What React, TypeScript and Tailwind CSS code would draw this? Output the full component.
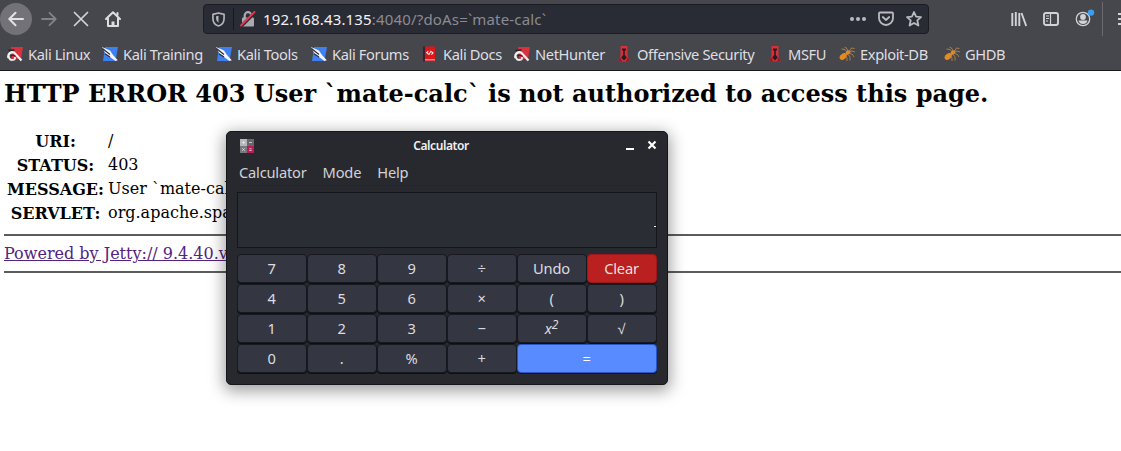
import React from "react";

type IconProps = { className?: string };

const Dragon = ({ className = "" }: IconProps) => (
  <svg viewBox="0 0 16 16" className={`h-4 w-4 shrink-0 ${className}`}>
    <path d="M4 1H16L14 13H5Z" fill="#d9323f" />
    <path d="M1.5 12C0.5 8 3.5 5.5 7 6.5L14.5 14.5" fill="none" stroke="#f4eeee" strokeWidth="2.3" />
    <path d="M1.5 10C1.5 13 4 14.8 7 13.6C8.2 13 8.2 11.8 7.6 11" fill="none" stroke="#f4eeee" strokeWidth="2" />
    <path d="M1.5 4.5L7.5 4" stroke="#25252c" strokeWidth="1.4" />
    <path d="M4 10Q6 8 8.6 10.5" fill="none" stroke="#25252c" strokeWidth="1.2" />
  </svg>
);

const Knife = () => (
  <svg viewBox="0 0 16 16" className="h-4 w-4 shrink-0">
    <path d="M3 1H16L13.5 15H1Z" fill="#3f7ff0" />
    <path d="M0 1L8 4.5L11 9L15.8 14.2L13.5 15L8 11L3.5 7.5Z" fill="#f3f6fb" />
    <path d="M0.5 2.5L8 8.5M3 7.8L8 11" stroke="#272b38" strokeWidth="1.1" />
  </svg>
);

const Docs = () => (
  <svg viewBox="0 0 16 16" className="h-4 w-4 shrink-0">
    <path d="M1 .5H4V15.5H1Z" fill="#3d2030" />
    <path d="M3 .5H13V15.5H3Z" fill="#d9181b" />
    <path d="M3 13.8H13" stroke="#f0dddd" strokeWidth=".9" />
    <path d="M6.3 5.2L4.7 6.7L7 8.4L8.8 5.2L11 6.9L9.4 8.6" fill="none" stroke="#f8e8e8" strokeWidth="1.1" />
  </svg>
);

const Tower = () => (
  <svg viewBox="0 0 16 16" className="h-4 w-4 shrink-0">
    <path d="M4.5 0H11.5V10L14 15.5H2L4.5 10Z" fill="#d82f38" />
    <path d="M6 2.5H10V4.5H8.8V9L10.8 11.5L8 14.5L5.2 11.5L7.2 9V4.5H6Z" fill="#291b20" />
    <path d="M2 15.5L4.5 11L6 15.5M14 15.5L11.5 11L10 15.5" fill="#8f1d24" />
  </svg>
);

const Bug = () => (
  <svg viewBox="0 0 16 16" className="h-4 w-4 shrink-0">
    <g fill="#e38a20">
      <ellipse cx="4.2" cy="10.5" rx="4" ry="2.7" transform="rotate(-38 4.2 10.5)" />
      <ellipse cx="9" cy="6.5" rx="2.7" ry="1.8" transform="rotate(-38 9 6.5)" />
    </g>
    <path d="M8 6L6 3.5L2.5 3M9 6L8 2.5L5.5 1M10 6L12.5 2L15.5 2.5M10 6.5L13 5L16 6M9.5 7L13.5 8.5L15 11M8 8L11 10.5V14.5M6 9L8 12V15" fill="none" stroke="#c28b4a" strokeWidth=".8" />
  </svg>
);

const bookmarks = [
  { text: "Kali Linux", width: "w-[95px]", Icon: Dragon },
  { text: "Kali Training", width: "w-[114px]", Icon: Knife },
  { text: "Kali Tools", width: "w-[95px]", Icon: Knife },
  { text: "Kali Forums", width: "w-[111px]", Icon: Knife },
  { text: "Kali Docs", width: "w-[92px]", Icon: Docs },
  { text: "NetHunter", width: "w-[102px]", Icon: Dragon },
  { text: "Offensive Security", width: "w-[151px]", Icon: Tower },
  { text: "MSFU", width: "w-[72px]", Icon: Tower },
  { text: "Exploit-DB", width: "w-[105px]", Icon: Bug },
  { text: "GHDB", width: "w-[80px]", Icon: Bug },
];

const Toolbar = () => (
  <div className="flex h-[38px] items-center overflow-hidden">
    <div className="flex h-8 w-8 shrink-0 items-center justify-center rounded-full bg-[#727278]">
      <svg viewBox="0 0 16 16" className="h-4 w-4" fill="none" stroke="#e2e2e4" strokeWidth="2" strokeLinecap="round" strokeLinejoin="round">
        <path d="M15 8H1.5M7.5 1.8L1.3 8L7.5 14.2" />
      </svg>
    </div>
    <svg viewBox="0 0 16 16" className="ml-[9px] h-4 w-4 shrink-0" fill="none" stroke="#828287" strokeWidth="1.8" strokeLinecap="round" strokeLinejoin="round">
      <path d="M1 8H14.5M8.5 1.8L14.7 8L8.5 14.2" />
    </svg>
    <svg viewBox="0 0 16 16" className="ml-4 h-4 w-4 shrink-0" fill="none" stroke="#d4d4d7" strokeWidth="1.7" strokeLinecap="round">
      <path d="M1.5 1.5L14.5 14.5M14.5 1.5L1.5 14.5" />
    </svg>
    <svg viewBox="0 0 16 16" className="ml-4 h-4 w-4 shrink-0" fill="none" stroke="#dededf" strokeWidth="2" strokeLinecap="round" strokeLinejoin="round">
      <path d="M1 8L8 1.2L15 8M3 7.5V15H13V7.5" />
      <path d="M8 15V10.5" strokeWidth="3" strokeLinecap="butt" />
      <path d="M12.5 2V4" />
    </svg>
    <div className="ml-[82px] flex h-[30px] w-[726px] shrink-0 items-center rounded-[4px] border border-[#1b1c23] bg-[#2a2c35] pl-2">
      <svg viewBox="0 0 14 16" className="h-[15px] w-[13px]" fill="none" stroke="#b5b5b9" strokeWidth="1.8" strokeLinejoin="round">
        <path d="M7 1L13 2.5V7C13 11 10.5 14 7 15C3.5 14 1 11 1 7V2.5Z" />
        <path d="M7 4V11.5C5.3 10.5 4.4 9 4.4 6.5V4.5Z" fill="#b5b5b9" stroke="none" />
      </svg>
      <div className="ml-2 h-[22px] w-px bg-[#17181e]" />
      <svg viewBox="0 0 16 16" className="ml-[6px] h-4 w-4">
        <path d="M4.7 7V4.5A3.3 3.3 0 0 1 11.3 4.5V7" fill="none" stroke="#aaaab0" strokeWidth="2.2" />
        <rect x="2" y="6.5" width="12" height="9" rx="1" fill="#aaaab0" />
        <path d="M1.5 15L15 1.5" stroke="#2a2c35" strokeWidth="3.2" />
        <path d="M1 14.5L14.5 1" stroke="#eb3553" strokeWidth="1.8" strokeLinecap="round" />
      </svg>
      <div className="ml-[7px] whitespace-pre text-[15px] leading-5 tracking-[0.17px] text-[#8b8b92]">
        <span className="text-[#f3f3f6]">192.168.43.135</span>:4040/?doAs=`mate-calc`
      </div>
      <div className="ml-auto flex items-center pr-[6px]">
        <svg viewBox="0 0 16 16" className="h-4 w-4" fill="#babbc0"><circle cx="2" cy="8" r="2" /><circle cx="8" cy="8" r="2" /><circle cx="14" cy="8" r="2" /></svg>
        <svg viewBox="0 0 16 16" className="ml-3 h-4 w-4" fill="none" stroke="#babbc0" strokeWidth="1.8" strokeLinecap="round" strokeLinejoin="round">
          <path d="M2 1.5H14Q15 1.5 15 2.5V7A7 7 0 0 1 1 7V2.5Q1 1.5 2 1.5ZM4.8 6L8 9L11.2 6" />
        </svg>
        <svg viewBox="0 0 16 16" className="ml-3 h-4 w-4" fill="none" stroke="#babbc0" strokeWidth="1.8" strokeLinejoin="round">
          <path d="M8 1L10.1 5.6L15 6.1L11.3 9.4L12.4 14.5L8 11.9L3.6 14.5L4.7 9.4L1 6.1L5.9 5.6Z" />
        </svg>
      </div>
    </div>
    <svg viewBox="0 0 16 16" className="ml-[82px] h-4 w-4 shrink-0" fill="none" stroke="#d3d3d6" strokeWidth="1.9">
      <path d="M1.3 2V15M4.8 1V15M8.3 2V15M10.5 2L15.2 15" />
    </svg>
    <svg viewBox="0 0 16 16" className="ml-4 h-4 w-4 shrink-0" fill="none" stroke="#d3d3d6" strokeWidth="1.9">
      <rect x="1" y="2" width="14" height="12" rx="2" />
      <path d="M7.5 2V14" strokeWidth="1.2" />
      <path d="M3 5H6M3 7.5H6M3 10H5" strokeWidth="1" />
    </svg>
    <svg viewBox="0 0 20 20" className="ml-4 h-5 w-5 shrink-0">
      <circle cx="8" cy="10" r="6.7" fill="none" stroke="#d3d3d6" strokeWidth="1.3" />
      <circle cx="8" cy="8" r="2.9" fill="#d3d3d6" />
      <path d="M3.5 11.5H12.5Q11.5 15 8 15T3.5 11.5Z" fill="#d3d3d6" />
      <circle cx="16" cy="3.6" r="3.2" fill="#3c9ef0" />
    </svg>
    <div className="ml-[7px] h-[34px] w-px shrink-0 bg-[#6a6a70]" />
    <svg viewBox="0 0 16 16" className="ml-[15px] h-4 w-4 shrink-0" stroke="#d3d3d6" strokeWidth="2"><path d="M0 3H16M0 8H16M0 13H16" /></svg>
  </div>
);

type KeySpec = { label: React.ReactNode; style?: string };
const normal = "border-[#171920] bg-[#343741] text-[#dcdde1]";
const keys: KeySpec[] = [
  { label: "7" }, { label: "8" }, { label: "9" }, { label: "÷" }, { label: "Undo" },
  { label: "Clear", style: "border-[#9e171b] bg-[#b9201f] text-[#f0dfdf]" },
  { label: "4" }, { label: "5" }, { label: "6" }, { label: "×" }, { label: "(" }, { label: ")" },
  { label: "1" }, { label: "2" }, { label: "3" }, { label: "−" },
  { label: <i>x<sup className="relative top-[-5px] text-[12px] leading-none align-baseline">2</sup></i> }, { label: "√" },
  { label: "0" }, { label: "." }, { label: "%" }, { label: "+" },
  { label: "=", style: "col-span-2 border-[#2854c5] bg-[#588bff] text-white" },
];

const Calculator = () => (
  <section className="absolute top-[131px] left-[226px] flex h-[254px] w-[442px] flex-col rounded-[5px] border border-[#15161b] bg-[#28292f] px-[10px] font-['Noto_Sans',sans-serif] shadow-[0_4px_16px_2px_rgba(0,0,0,0.38)]">
    <header className="grid h-[27px] grid-cols-[1fr_auto_1fr] items-center">
      <svg viewBox="0 0 14 14" className="ml-[3px] h-[14px] w-[14px]">
        <path d="M0 0H7V7H0Z" fill="#b7b7b9" /><path d="M7 0H14V7H7Z" fill="#66676f" />
        <path d="M0 7H7V14H0Z" fill="#777980" /><path d="M7 7H14V14H7Z" fill="#b71f55" />
        <path d="M2 3.5H5M3.5 2V5M9 3.5H12M2.2 9.2L4.8 11.8M4.8 9.2L2.2 11.8M9.3 9.8H11.7M9.3 11.5H11.7" stroke="#ececef" strokeWidth=".7" />
      </svg>
      <h1 className="mr-3 text-[12px] font-semibold tracking-[-0.4px] text-[#f1f1f3]">Calculator</h1>
      <div className="flex items-center justify-end">
        <svg viewBox="0 0 8 8" className="mr-[13px] h-2 w-2"><path d="M0 7H8" stroke="#fff" strokeWidth="2" /></svg>
        <svg viewBox="0 0 10 10" className="-mt-px h-[10px] w-[10px]"><path d="M1.5 1.5L8.5 8.5M8.5 1.5L1.5 8.5" stroke="#fff" strokeWidth="2.2" /></svg>
      </div>
    </header>
    <nav className="flex h-[27px] items-center gap-4 border-b border-[#24262c] pl-[2px] text-[14.67px] tracking-[-0.2px] text-[#d2d3d7]">
      <span>Calculator</span><span>Mode</span><span>Help</span>
    </nav>
    <div className="mt-[6px] flex h-[56px] shrink-0 items-center justify-end border border-[#15161b] bg-[#2b2d35]">
      <div className="mt-[12px] h-px w-[2px] bg-white" />
    </div>
    <div className="mt-[6px] grid auto-rows-[30px] grid-cols-6">
      {keys.map((key, i) => (
        <button key={i} className={`mb-px flex items-center justify-center rounded-[4px] border pr-px pb-[2px] text-[14.67px] leading-5 tracking-[-0.2px] shadow-[0_1px_0_#0e0f14] ${key.style ?? normal}`}>
          <span>{key.label}</span>
        </button>
      ))}
    </div>
  </section>
);

const rows = [
  ["URI:", "/"],
  ["STATUS:", "403"],
  ["MESSAGE:", "User `mate-calc`"],
  ["SERVLET:", "org.apache.spark"],
];

export default function App() {
  return (
    <div className="relative h-[451px] w-[1121px] overflow-hidden bg-white">
      <div className="h-[71px] border-b border-[#17151e] bg-[#46464d] font-['Noto_Sans',sans-serif]">
        <Toolbar />
        <nav className="flex h-8 items-center pl-[7px] text-[14.67px] tracking-[-0.38px] text-[#dfdfe1]">
          {bookmarks.map(({ text, width, Icon }) => (
            <div key={text} className={`flex shrink-0 items-center gap-[5px] whitespace-nowrap ${width}`}><Icon /><span>{text}</span></div>
          ))}
        </nav>
      </div>
      <main className="pt-[9px] pl-1 font-['DejaVu_Serif',serif] text-base leading-6 text-black">
        <h2 className="text-[24px] leading-7 font-bold whitespace-nowrap">HTTP ERROR 403 User `mate-calc` is not authorized to access this page.</h2>
        <table className="mt-[21px] border-collapse">
          <tbody>
            {rows.map(([name, value]) => (
              <tr key={name} className="h-6"><th className="w-[101px] p-0 pt-px pl-[2px] leading-[23px]">{name}</th><td className="p-0 pl-[3px] leading-6 whitespace-nowrap">{value}</td></tr>
            ))}
          </tbody>
        </table>
        <hr className="mt-[9px] border-t-2 border-[#5c5c5c]" />
        <a className="mt-[6px] block h-6 text-[#54237d] underline">Powered by Jetty:// 9.4.40.v</a>
        <hr className="mt-[5px] border-t-2 border-[#5c5c5c]" />
      </main>
      <Calculator />
    </div>
  );
}
